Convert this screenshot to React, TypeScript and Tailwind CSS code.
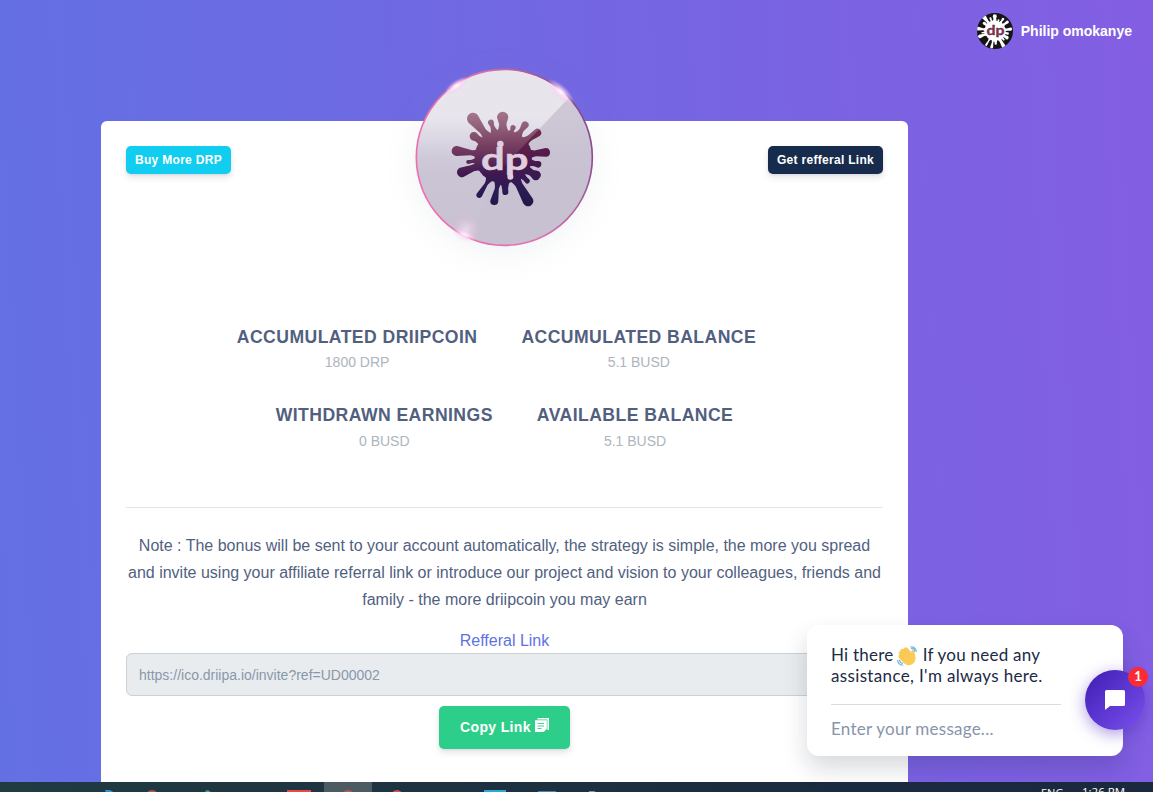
import React from "react";

type Arm = [x: number, y: number, r: number, neck: number];

const ARMS: Arm[] = [
  [207, 176, 18, 10], [261, 188, 9, 6], [296, 172, 17, 11], [327, 203, 8, 6], [363, 195, 11, 7],
  [400, 218, 12, 9], [210, 229, 13, 10], [158, 273, 15, 8], [192, 306, 6, 5], [173, 337, 15, 10],
  [226, 405, 9, 5], [271, 423, 12, 6], [304, 396, 9, 9], [372, 423, 16, 11], [396, 346, 15, 10],
  [402, 313, 10, 8], [426, 277, 13, 9], [370, 363, 8, 7],
];

const CX = 298;
const CY = 290;

function armPath([x, y, r, neck]: Arm): string {
  const dx = x - CX;
  const dy = y - CY;
  const len = Math.hypot(dx, dy);
  const ux = dx / len;
  const uy = dy / len;
  const at = (d: number, s: number) =>
    `${(CX + ux * d - uy * s).toFixed(1)} ${(CY + uy * d + ux * s).toFixed(1)}`;
  const base = 56;
  const mid = Math.min(98, len - r);
  return `M${at(base, 28)} Q${at(mid - 16, neck)} ${at(mid, neck)} L${at(len, r)} A${r} ${r} 0 0 0 ${at(len, -r)} L${at(mid, -neck)} Q${at(mid - 16, -neck)} ${at(base, -28)} Z`;
}

function Splat({ fill }: { fill: string }) {
  return (
    <g fill={fill}>
      <ellipse cx={CX} cy={CY} rx="86" ry="80" />
      {ARMS.map((a) => (
        <path key={`${a[0]}-${a[1]}`} d={armPath(a)} />
      ))}
    </g>
  );
}

function CoinLogo() {
  return (
    <svg viewBox="0 0 600 600" className="block h-[200px] w-[200px]">
      <defs>
        <linearGradient id="face" x1="0" y1="0" x2="0" y2="1">
          <stop offset="0" stopColor="#e8e5ec" />
          <stop offset="0.3" stopColor="#dcd8e4" />
          <stop offset="0.5" stopColor="#cbc5d6" />
          <stop offset="1" stopColor="#c8c1d1" />
        </linearGradient>
        <linearGradient id="splat" gradientUnits="userSpaceOnUse" x1="290" y1="155" x2="310" y2="440">
          <stop offset="0" stopColor="#7a3a58" />
          <stop offset="0.35" stopColor="#622048" />
          <stop offset="0.6" stopColor="#43184f" />
          <stop offset="0.8" stopColor="#2f1a55" />
          <stop offset="1" stopColor="#221a48" />
        </linearGradient>
        <linearGradient id="rim" x1="0" y1="0.7" x2="1" y2="0.3">
          <stop offset="0" stopColor="#ee6fb0" />
          <stop offset="0.55" stopColor="#d970ad" />
          <stop offset="1" stopColor="#7d4a8c" />
        </linearGradient>
        <linearGradient id="gloss" gradientUnits="userSpaceOnUse" x1="0" y1="40" x2="0" y2="345">
          <stop offset="0" stopColor="#fff" stopOpacity="0.05" />
          <stop offset="0.4" stopColor="#fff" stopOpacity="0.3" />
          <stop offset="0.7" stopColor="#fff" stopOpacity="0.14" />
          <stop offset="1" stopColor="#fff" stopOpacity="0" />
        </linearGradient>
        <radialGradient id="spark">
          <stop offset="0" stopColor="#fff" />
          <stop offset="0.25" stopColor="#ffe6fa" stopOpacity="0.9" />
          <stop offset="1" stopColor="#fbbcea" stopOpacity="0" />
        </radialGradient>
        <clipPath id="disc">
          <circle cx="301" cy="292" r="263" />
        </clipPath>
      </defs>
      <circle cx="301" cy="292" r="263" fill="url(#face)" />
      <path d="M496 112 L620 112 V560 H200 L262 360 Z" fill="#c7c0d0" opacity="0.75" clipPath="url(#disc)" />
      <Splat fill="url(#splat)" />
      <g clipPath="url(#disc)">
        <path d="M0 0 H496 V112 L262 360 H0 Z" fill="url(#gloss)" />
      </g>
      <g fill="#dfcedd">
        <text x="302" y="329" textAnchor="middle" fontSize="92" fontWeight="700" stroke="#dfcedd" strokeWidth="1.5" textLength="142" lengthAdjust="spacingAndGlyphs" className="font-['Lato',sans-serif]">
          dp
        </text>
        <circle cx="289" cy="252" r="10" />
        <circle cx="319" cy="350" r="9" />
      </g>
      <circle cx="301" cy="292" r="264" fill="none" stroke="url(#rim)" strokeWidth="5" />
      <ellipse cx="157" cy="78" rx="42" ry="17" fill="url(#spark)" transform="rotate(-35 157 78)" />
      <ellipse cx="470" cy="95" rx="52" ry="20" fill="url(#spark)" transform="rotate(42 470 95)" />
      <ellipse cx="182" cy="524" rx="38" ry="15" fill="url(#spark)" transform="rotate(22 182 524)" />
      <circle cx="186" cy="508" r="42" fill="url(#spark)" opacity="0.45" />
    </svg>
  );
}

function Avatar() {
  return (
    <svg viewBox="0 0 36 36" className="block h-9 w-9 shrink-0 rounded-full bg-[#151515]">
      <g transform="translate(18 18) scale(.122 .122) translate(-298 -292)">
        <Splat fill="#fff" />
      </g>
      <text x="18.6" y="22.4" textAnchor="middle" fontSize="13" fontWeight="700" fill="#8d3050" stroke="#452334" strokeWidth=".3" textLength="18" lengthAdjust="spacingAndGlyphs" className="font-['Lato',sans-serif]">
        dp
      </text>
    </svg>
  );
}

function Stat({ title, value, className = "" }: { title: string; value: string; className?: string }) {
  return (
    <div className={`p-3.5 text-center ${className}`}>
      <div className="text-[17.6px] leading-[26.4px] font-bold tracking-[0.44px] text-[#525f7f]">{title}</div>
      <div className="text-sm leading-6 text-[#adb5bd]">{value}</div>
    </div>
  );
}

function CopyIcon() {
  return (
    <svg viewBox="0 0 14 14" className="h-3.5 w-3.5">
      <path d="M2.5 0H14v12h-1.6V1.5H2.5z" fill="#fff" />
      <path d="M0 2.2h11.8v8.6L8.8 14H0z" fill="#fff" />
      <path d="M2.5 5.5h6.5M2.5 8h6.5M2.5 10.5h4" stroke="#2dce89" strokeWidth=".9" />
    </svg>
  );
}

function WaveIcon() {
  return (
    <svg viewBox="0 0 20 20" className="relative -left-px inline-block h-5 w-5 align-[-5px]">
      <path d="M3.6 3.6C4.4 2.4 5.8 2.4 6.6 3.1L7.3 2C8.4 .9 10 1.2 10.8 2.3L14.5 6.6 14.4 5.3C14.6 3.8 16.4 3.6 17.1 5L18.4 10.8C19 14.5 17.4 17.2 14.7 18.6 11.7 19.9 8.5 19 6.6 16.8L2 12C1 10.8 1.3 9.4 2.4 8.8L1.8 7.3C1.4 6 2.3 5 3.4 4.9Z" fill="#fbcb57" />
      <path d="M4.5 5.5l4 4.8M3.4 9l4 4.3M7.4 3.4l4.3 5" stroke="#f0b447" strokeWidth=".5" fill="none" />
      <path d="M14 .8c2.7-.2 5 1.7 5.2 4.5M14.5 2.4c1.8 0 3 1.1 3.3 2.9M.7 14.3c.2 2.8 2.3 4.8 5 4.8M2.5 14c.1 1.8 1.4 3.1 3.1 3.3" stroke="#74b6e8" strokeWidth="1.2" fill="none" strokeLinecap="round" />
    </svg>
  );
}

function ChatWidget() {
  return (
    <div className="absolute top-[625px] left-[807px] h-[131px] w-[316px] rounded-xl bg-white px-6 pt-[19px] font-['Lato',sans-serif] shadow-[0_12px_24px_rgba(0,18,46,0.16)]">
      <p className="text-[17px] leading-[21px] text-[#1c2b45]">
        <span className="block h-[21px] tracking-[0.24px] whitespace-nowrap">
          Hi there <WaveIcon /> If you need any
        </span>
        <span className="block h-[21px] tracking-[0.35px] whitespace-nowrap">assistance, I'm always here.</span>
      </p>
      <div className="mt-[18px] w-[230px] border-t border-[#d9dce1] pt-[13px] text-[17px] leading-[21px] tracking-[0.25px] text-[#8894ab]">
        Enter your message...
      </div>
      <button className="absolute top-[45px] left-[278px] flex h-[60px] w-[60px] items-center justify-center rounded-full bg-[linear-gradient(135deg,#3f1db4,#7a50ee)] shadow-[0_4px_16px_rgba(77,35,190,0.45)]">
        <svg viewBox="0 0 20 20" className="h-5 w-5">
          <path d="M1.6 0h16.8Q20 0 20 1.6v12.8q0 1.6-1.6 1.6H5L0 20V1.6Q0 0 1.6 0z" fill="#fff" />
        </svg>
      </button>
      <span className="absolute top-[42px] left-[321px] flex h-5 w-5 items-center justify-center rounded-full bg-[#fb2b35] text-[13px] font-bold text-white">
        1
      </span>
    </div>
  );
}

function Taskbar() {
  return (
    <div className="relative h-[10px] shrink-0 overflow-hidden bg-[linear-gradient(90deg,#213b41,#1c2d40_60%,#1b293f)]">
      <svg viewBox="0 0 1153 10" className="block h-[10px] w-full">
        <rect x="324" width="48" height="10" fill="#4c5a61" />
        <path d="M105 8l5 0 5 3h-9z" fill="#2c93d6" />
        <circle cx="152" cy="14" r="6" fill="#b5534b" />
        <path d="M205 9l3-1 4 3h-6z" fill="#3e9f83" />
        <rect x="287" y="8" width="24" height="2" fill="#e84b43" />
        <circle cx="348" cy="14" r="6" fill="#b9564e" />
        <circle cx="397" cy="14" r="6" fill="#c9554b" />
        <rect x="484" y="8" width="22" height="2" fill="#27abd4" />
        <rect x="538" y="9" width="18" height="1" fill="#4783b9" />
        <path d="M589 9h5l4 2h-9z" fill="#8b9295" />
      </svg>
      <span className="absolute top-[3px] left-[1041px] font-['Open_Sans',sans-serif] text-[11px] leading-[15px] text-white">ENG</span>
      <span className="absolute top-[2px] left-[1082px] font-['Open_Sans',sans-serif] text-[11.5px] leading-[15px] text-white">1:26 PM</span>
    </div>
  );
}

export default function App() {
  return (
    <div className="relative flex h-[792px] w-[1153px] flex-col overflow-hidden bg-[linear-gradient(87deg,#6370e3,#835ee3)] font-['Liberation_Sans',Arial,sans-serif]">
      <header className="flex h-[121px] shrink-0 items-start justify-end pt-[13px] pr-[21px]">
        <div className="flex items-center gap-2">
          <Avatar />
          <span className="text-sm font-bold whitespace-nowrap text-white">Philip omokanye</span>
        </div>
      </header>

      <main className="relative ml-[101px] flex w-[807px] flex-1 flex-col rounded-t-md bg-white px-[25px] pt-[25px]">
        <div className="absolute -top-[61px] left-[303px] rounded-full">
          <div className="absolute top-[10px] left-[12px] h-[176px] w-[176px] rounded-full shadow-[0_6px_32px_rgba(136,152,170,0.13)]" />
          <div className="relative">
            <CoinLogo />
          </div>
        </div>

        <div className="flex justify-between text-xs font-bold text-white">
          <button className="h-7 w-[105px] rounded-[5px] bg-[#11cdef] tracking-[0.3px] whitespace-nowrap shadow-[0_4px_6px_rgba(50,50,93,0.11),0_1px_3px_rgba(0,0,0,0.08)]">Buy More DRP</button>
          <button className="h-7 w-[115px] rounded-[5px] bg-[#172b4d] tracking-[0.3px] whitespace-nowrap shadow-[0_4px_6px_rgba(50,50,93,0.11),0_1px_3px_rgba(0,0,0,0.08)]">Get refferal Link</button>
        </div>

        <section className="mt-[136px] whitespace-nowrap">
          <div className="flex justify-center">
            <Stat title="ACCUMULATED DRIIPCOIN" value="1800 DRP" className="mr-4" />
            <Stat title="ACCUMULATED BALANCE" value="5.1 BUSD" className="mr-4" />
          </div>
          <div className="flex justify-center">
            <Stat title="WITHDRAWN EARNINGS" value="0 BUSD" className="mr-4" />
            <Stat title="AVAILABLE BALANCE" value="5.1 BUSD" />
          </div>
        </section>

        <section className="mt-10 border-t border-[#e5e5e5] pt-6 text-center">
          <p className="text-base leading-[27px] whitespace-nowrap text-[#525f7f]">
            Note : The bonus will be sent to your account automatically, the strategy is simple, the more you spread
            <br />
            and invite using your affiliate referral link or introduce our project and vision to your colleagues, friends and
            <br />
            family - the more driipcoin you may earn
          </p>
          <div className="mt-[14px] h-[26px] text-base leading-[27px] text-[#5e72e4]">Refferal Link</div>
          <div className="flex h-[43px] items-center rounded-md border border-[#cad1d7] bg-[#e9ecef] px-3 text-sm text-[#8898aa]">
            <span className="pt-px">https://ico.driipa.io/invite?ref=UD00002</span>
          </div>
          <button className="mx-auto mt-[10px] flex h-[43px] w-[131px] items-center justify-center gap-1 rounded-[5px] bg-[#2dce89] text-sm font-bold tracking-[0.35px] whitespace-nowrap text-white shadow-[0_4px_6px_rgba(50,50,93,0.11),0_1px_3px_rgba(0,0,0,0.08)]">
            Copy Link
            <span className="-mt-1">
              <CopyIcon />
            </span>
          </button>
        </section>
      </main>

      <Taskbar />
      <ChatWidget />
    </div>
  );
}
